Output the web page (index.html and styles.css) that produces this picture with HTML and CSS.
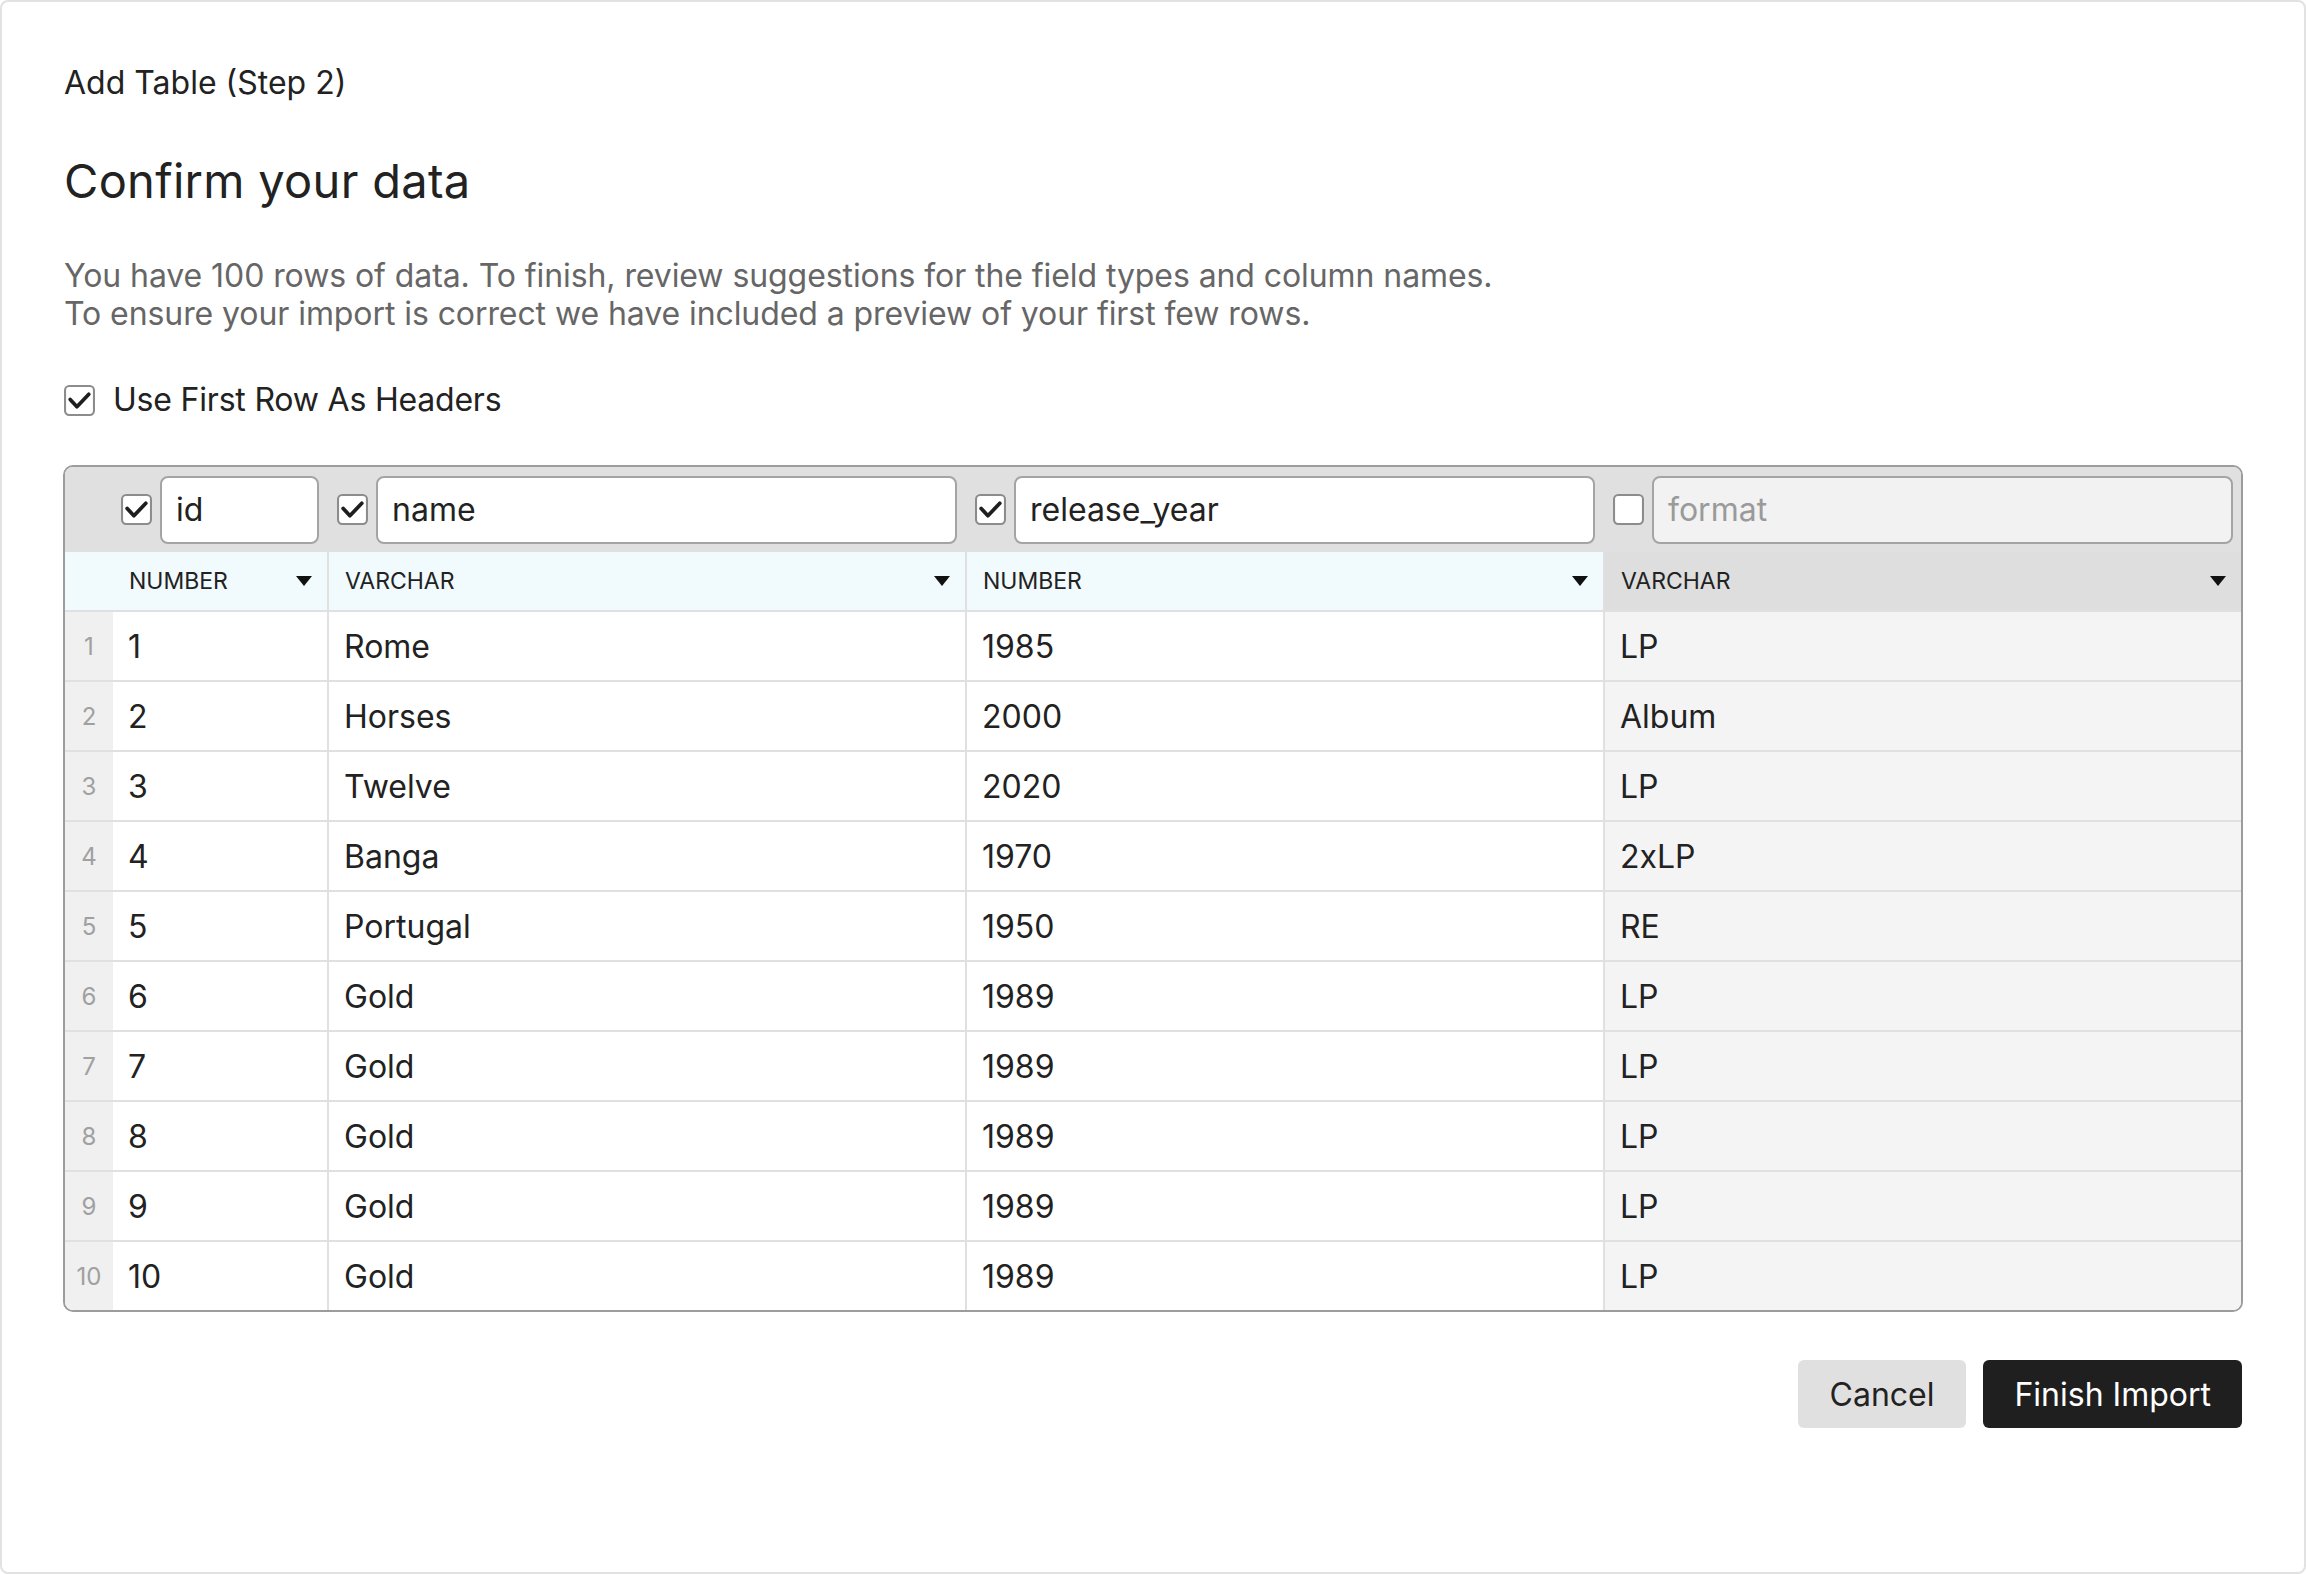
FILE: index.html
```html
<!DOCTYPE html>
<html lang="en">
<head>
<meta charset="utf-8">
<title>Add Table (Step 2)</title>
<link rel="stylesheet" href="styles.css">
</head>
<body>
<div class="card">
  <div class="step">Add Table (Step 2)</div>
  <h1 class="heading">Confirm your data</h1>
  <p class="intro">You have 100 rows of data. To finish, review suggestions for the field types and column names.<br>To ensure your import is correct we have included a preview of your first few rows.</p>
  <label class="use-headers">
    <svg class="cb" viewBox="0 0 30 30"><rect x="1" y="1" width="28" height="28" rx="4"/><polyline points="6,14 12.5,21 24,9"/></svg>
    <span>Use First Row As Headers</span>
  </label>

  <div class="grid">
    <div class="row head">
      <div class="cell num"></div>
      <div class="cell hcell c1"><svg class="cb" viewBox="0 0 30 30"><rect x="1" y="1" width="28" height="28" rx="4"/><polyline points="6,14 12.5,21 24,9"/></svg><div class="field">id</div></div>
      <div class="cell hcell"><svg class="cb" viewBox="0 0 30 30"><rect x="1" y="1" width="28" height="28" rx="4"/><polyline points="6,14 12.5,21 24,9"/></svg><div class="field">name</div></div>
      <div class="cell hcell"><svg class="cb" viewBox="0 0 30 30"><rect x="1" y="1" width="28" height="28" rx="4"/><polyline points="6,14 12.5,21 24,9"/></svg><div class="field">release_year</div></div>
      <div class="cell hcell"><svg class="cb off" viewBox="0 0 30 30"><rect x="1" y="1" width="28" height="28" rx="4"/></svg><div class="field disabled">format</div></div>
    </div>
    <div class="row types">
      <div class="cell num"></div>
      <div class="cell tcell c1"><span>NUMBER</span><svg class="tri" viewBox="0 0 16 10"><polygon points="0,0 16,0 8,10"/></svg></div>
      <div class="cell tcell"><span>VARCHAR</span><svg class="tri" viewBox="0 0 16 10"><polygon points="0,0 16,0 8,10"/></svg></div>
      <div class="cell tcell"><span>NUMBER</span><svg class="tri" viewBox="0 0 16 10"><polygon points="0,0 16,0 8,10"/></svg></div>
      <div class="cell tcell off"><span>VARCHAR</span><svg class="tri" viewBox="0 0 16 10"><polygon points="0,0 16,0 8,10"/></svg></div>
    </div>
    <div class="row data"><div class="cell num">1</div><div class="cell c1">1</div><div class="cell">Rome</div><div class="cell">1985</div><div class="cell off">LP</div></div>
    <div class="row data"><div class="cell num">2</div><div class="cell c1">2</div><div class="cell">Horses</div><div class="cell">2000</div><div class="cell off">Album</div></div>
    <div class="row data"><div class="cell num">3</div><div class="cell c1">3</div><div class="cell">Twelve</div><div class="cell">2020</div><div class="cell off">LP</div></div>
    <div class="row data"><div class="cell num">4</div><div class="cell c1">4</div><div class="cell">Banga</div><div class="cell">1970</div><div class="cell off">2xLP</div></div>
    <div class="row data"><div class="cell num">5</div><div class="cell c1">5</div><div class="cell">Portugal</div><div class="cell">1950</div><div class="cell off">RE</div></div>
    <div class="row data"><div class="cell num">6</div><div class="cell c1">6</div><div class="cell">Gold</div><div class="cell">1989</div><div class="cell off">LP</div></div>
    <div class="row data"><div class="cell num">7</div><div class="cell c1">7</div><div class="cell">Gold</div><div class="cell">1989</div><div class="cell off">LP</div></div>
    <div class="row data"><div class="cell num">8</div><div class="cell c1">8</div><div class="cell">Gold</div><div class="cell">1989</div><div class="cell off">LP</div></div>
    <div class="row data"><div class="cell num">9</div><div class="cell c1">9</div><div class="cell">Gold</div><div class="cell">1989</div><div class="cell off">LP</div></div>
    <div class="row data"><div class="cell num">10</div><div class="cell c1">10</div><div class="cell">Gold</div><div class="cell">1989</div><div class="cell off">LP</div></div>
  </div>

  <div class="actions">
    <button class="btn secondary">Cancel</button>
    <button class="btn primary">Finish Import</button>
  </div>
</div>
</body>
</html>
```

FILE: styles.css
```css
* { box-sizing: border-box; }
html, body { margin: 0; padding: 0; background: #fff; }
body {
  font-family: Inter, "Noto Sans", "Liberation Sans", sans-serif;
  color: #222;
}
.card {
  height: 100vh;
  border: 2px solid #e2e2e2;
  border-radius: 8px;
  padding: 62px 61px 0 62px;
  display: flex;
  flex-direction: column;
}
.step {
  font-size: 32px;
  line-height: 38px;
}
.heading {
  margin: 52px 0 0;
  font-size: 47px;
  line-height: 54px;
  font-weight: 400;
  letter-spacing: 0.3px;
}
.intro {
  margin: 49px 0 0;
  font-size: 32px;
  line-height: 38px;
  color: #666;
  letter-spacing: -0.08px;
}
.use-headers {
  margin-top: 48px;
  display: flex;
  align-items: center;
  gap: 18px;
  font-size: 32px;
  line-height: 38px;
  letter-spacing: -0.2px;
}
.cb { width: 31px; height: 31px; flex: none; display: block; }
.cb rect { fill: #fff; stroke: #8c8c8c; stroke-width: 2; }
.cb polyline { fill: none; stroke: #1e1e1e; stroke-width: 3.6; stroke-linecap: round; stroke-linejoin: round; }

.grid {
  margin-top: 46px;
  margin-left: -1px;
  border: 2px solid #9c9c9c;
  border-radius: 10px;
  overflow: hidden;
}
.row {
  display: grid;
  grid-template-columns: 48px 214px 1fr 1fr 1fr;
}
.cell {
  border-left: 2px solid #e0e0e0;
  display: flex;
  align-items: center;
  min-width: 0;
}
.cell.num, .cell.c1 { border-left: none; }

.head { height: 85px; background: #e0e0e0; }
.head .cell { border-left-color: transparent; }
.hcell { padding: 0 8px; gap: 8px; }
.field {
  flex: 1;
  height: 68px;
  border: 2px solid #a4a4a4;
  border-radius: 8px;
  background: #fff;
  font-size: 32px;
  padding-left: 14px;
  display: flex;
  align-items: center;
  color: #222;
}
.field.disabled { background: #f2f2f2; color: #9a9a9a; }

.types { height: 58px; background: #f1fafd; }
.tcell {
  padding: 0 15px 0 16px;
  justify-content: space-between;
  font-size: 23px;
  color: #222;
}
.tcell.off { background: #dedede; }
.tri { width: 16px; height: 10px; display: block; }
.tri polygon { fill: #111; }

.data { height: 70px; border-top: 2px solid #e0e0e0; }
.data .cell { padding-left: 15px; font-size: 32px; color: #222; }
.data .cell.num {
  padding: 0;
  justify-content: center;
  background: #f0f0f0;
  font-size: 24px;
  color: #a0a0a0;
}
.data .cell.off { background: #f4f4f4; }

.actions {
  margin-top: 48px;
  padding-right: 1px;
  display: flex;
  justify-content: flex-end;
  gap: 17px;
}
.btn {
  height: 68px;
  border: none;
  border-radius: 6px;
  padding: 0 31px;
  font-family: inherit;
  font-size: 32px;
}
.secondary { background: #e0e0e0; color: #222; padding: 0 32px; }
.primary { background: #1f1f1f; color: #fff; }
```
